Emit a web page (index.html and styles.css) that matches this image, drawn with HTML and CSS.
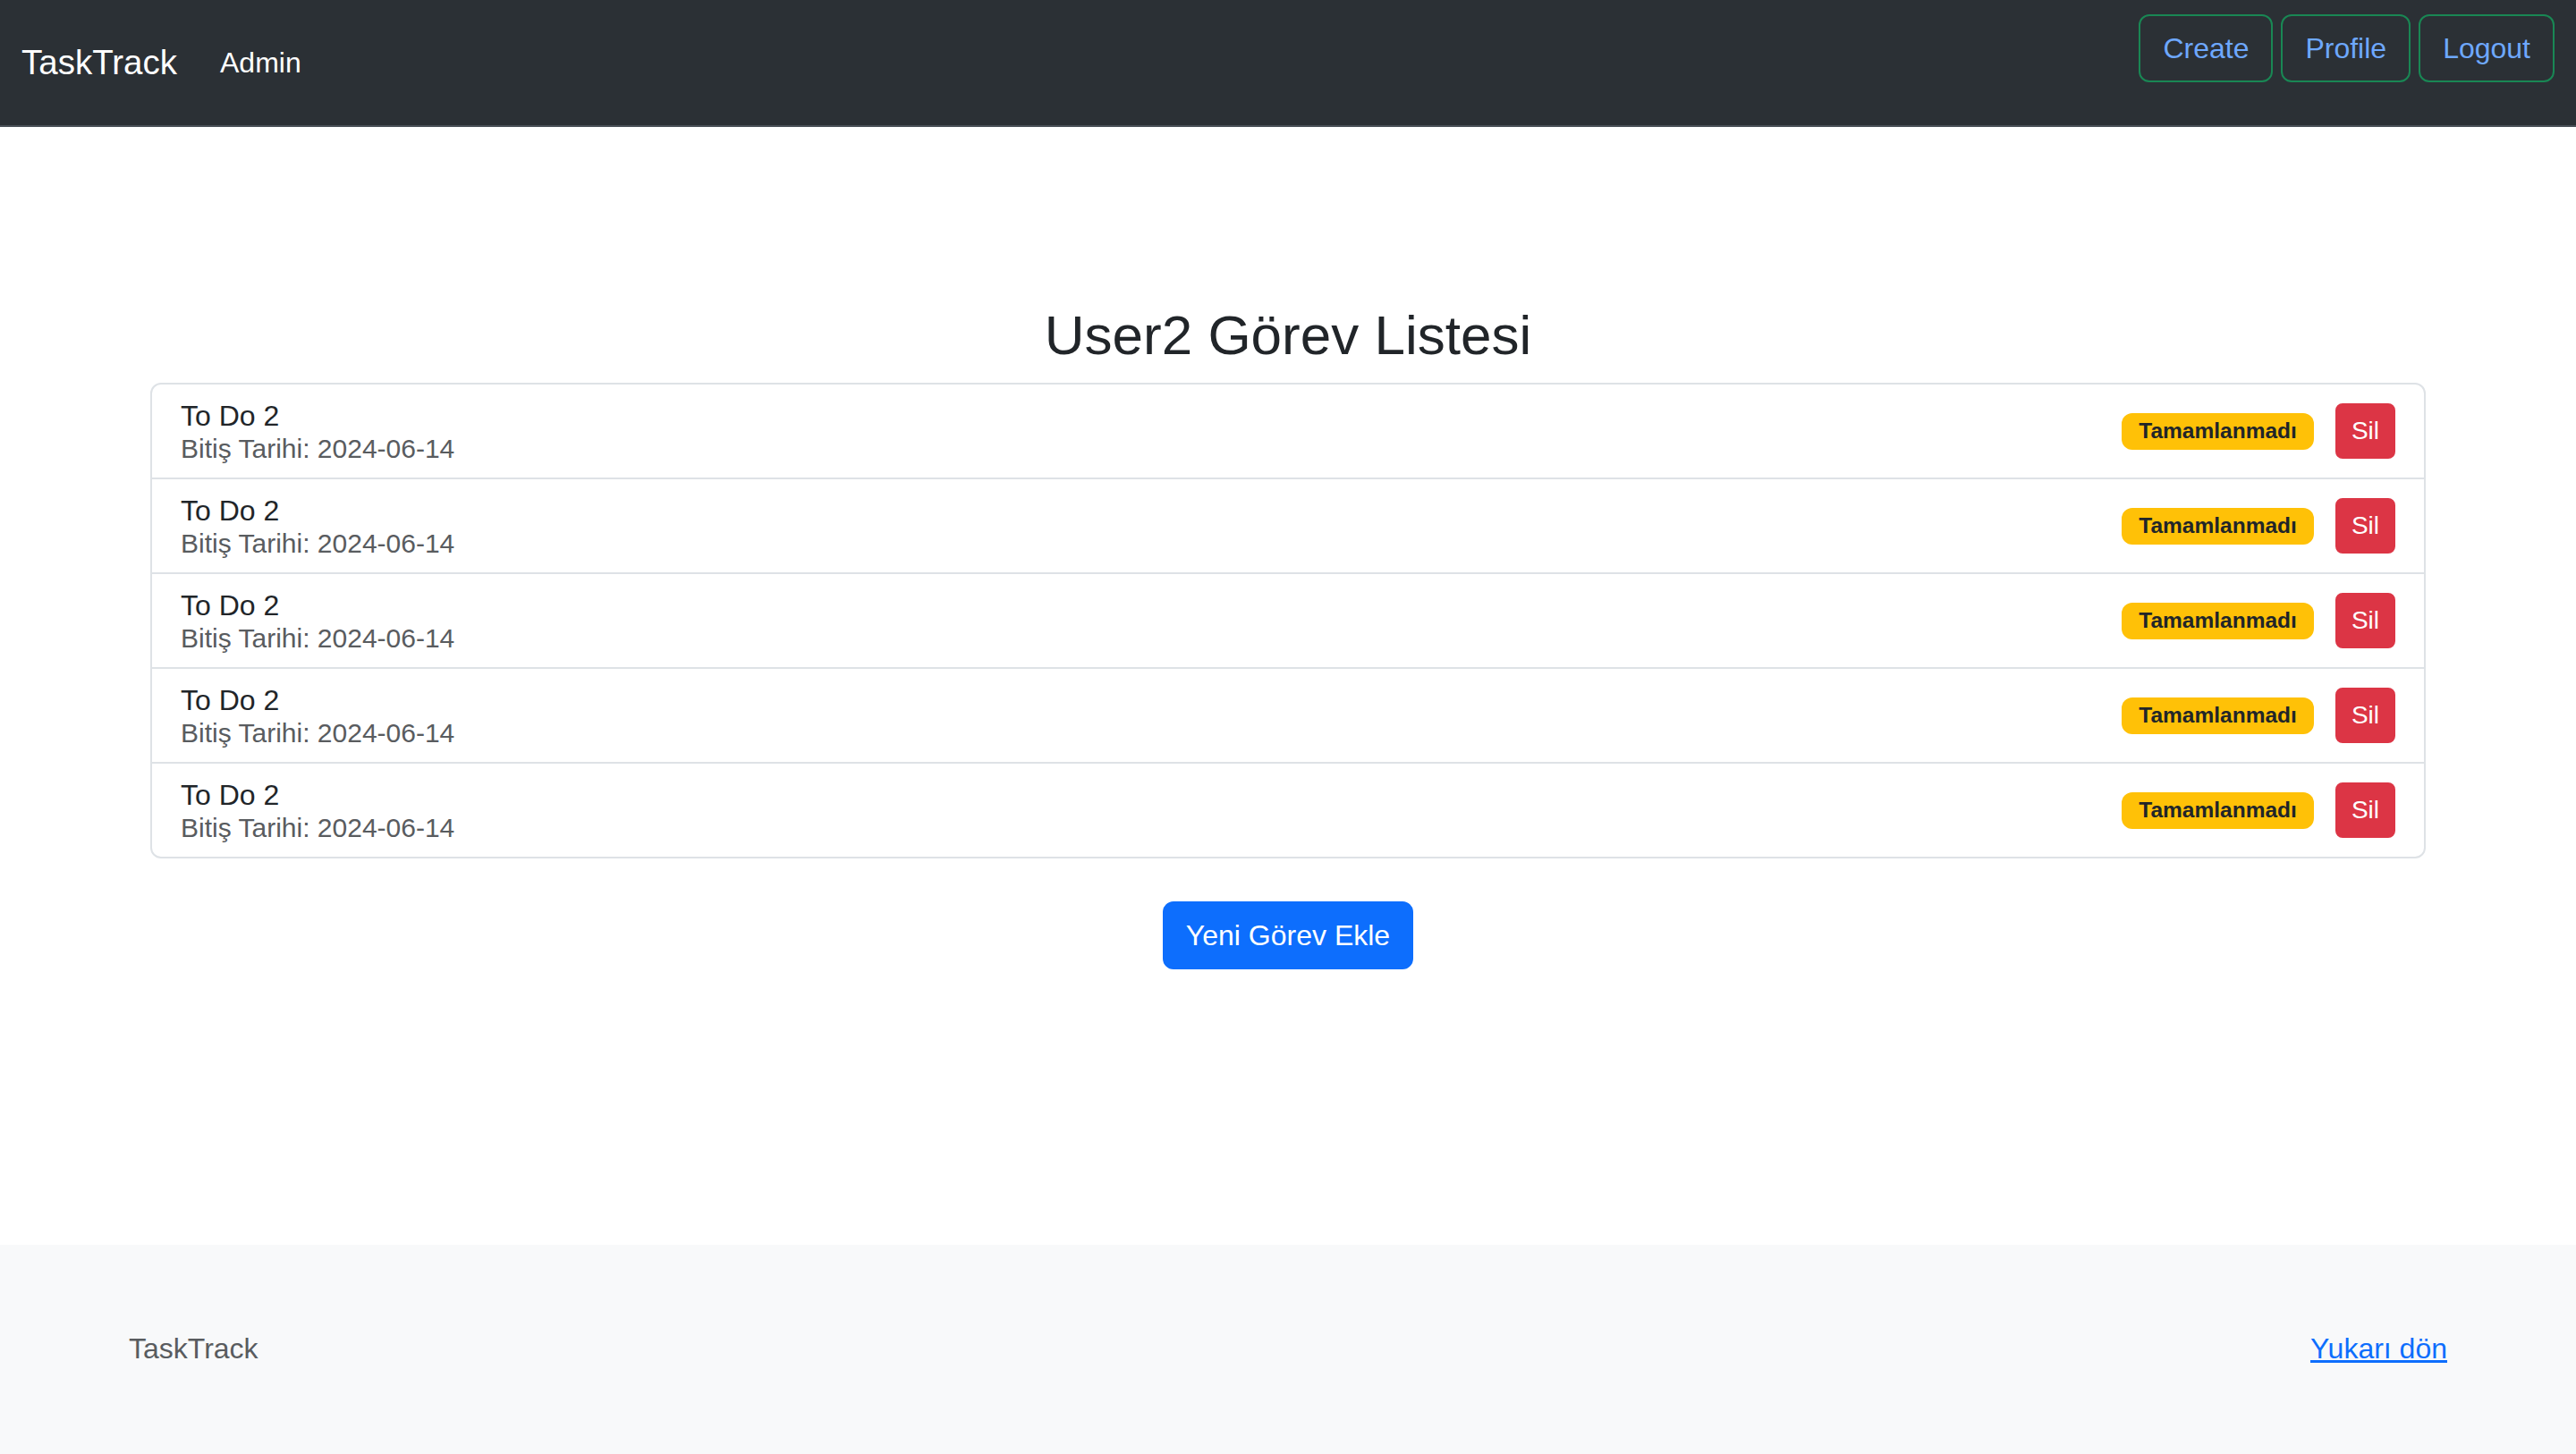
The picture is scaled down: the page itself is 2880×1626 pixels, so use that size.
FILE: index.html
```html
<!DOCTYPE html>
<html lang="tr">
<head>
<meta charset="utf-8">
<title>TaskTrack</title>
<link rel="stylesheet" href="styles.css">
</head>
<body>
<nav class="navbar">
  <div class="nav-left">
    <a class="brand" href="#">TaskTrack</a>
    <a class="nav-link" href="#">Admin</a>
  </div>
  <div class="nav-right">
    <a class="btn-outline" href="#">Create</a>
    <a class="btn-outline" href="#">Profile</a>
    <a class="btn-outline" href="#">Logout</a>
  </div>
</nav>
<main class="main">
  <h2 class="title">User2 Görev Listesi</h2>
  <ul class="list">
    <li class="item">
      <div class="item-text"><div class="item-title">To Do 2</div><div class="item-date">Bitiş Tarihi: 2024-06-14</div></div>
      <div class="item-actions"><span class="badge">Tamamlanmadı</span><button class="btn-danger">Sil</button></div>
    </li>
    <li class="item">
      <div class="item-text"><div class="item-title">To Do 2</div><div class="item-date">Bitiş Tarihi: 2024-06-14</div></div>
      <div class="item-actions"><span class="badge">Tamamlanmadı</span><button class="btn-danger">Sil</button></div>
    </li>
    <li class="item">
      <div class="item-text"><div class="item-title">To Do 2</div><div class="item-date">Bitiş Tarihi: 2024-06-14</div></div>
      <div class="item-actions"><span class="badge">Tamamlanmadı</span><button class="btn-danger">Sil</button></div>
    </li>
    <li class="item">
      <div class="item-text"><div class="item-title">To Do 2</div><div class="item-date">Bitiş Tarihi: 2024-06-14</div></div>
      <div class="item-actions"><span class="badge">Tamamlanmadı</span><button class="btn-danger">Sil</button></div>
    </li>
    <li class="item">
      <div class="item-text"><div class="item-title">To Do 2</div><div class="item-date">Bitiş Tarihi: 2024-06-14</div></div>
      <div class="item-actions"><span class="badge">Tamamlanmadı</span><button class="btn-danger">Sil</button></div>
    </li>
  </ul>
  <div class="add-wrap"><a class="btn-primary" href="#">Yeni Görev Ekle</a></div>
</main>
<footer class="footer">
  <div class="footer-inner">
    <span class="footer-brand">TaskTrack</span>
    <a class="footer-link" href="#">Yukarı dön</a>
  </div>
</footer>
</body>
</html>
```
FILE: styles.css
```css
* { box-sizing: border-box; }
html, body { margin: 0; padding: 0; }
body {
  font-family: "Liberation Sans", Arial, sans-serif;
  font-size: 32px;
  line-height: 1.5;
  color: #212529;
  background: #fff;
}
a { text-decoration: none; }

.navbar {
  height: 142px;
  background: #2b3035;
  border-bottom: 2px solid #495057;
  display: flex;
  justify-content: space-between;
  align-items: center;
  padding: 0 24px;
}
.nav-left { display: flex; align-items: center; }
.brand {
  color: #fff;
  font-size: 38.5px;
  line-height: 60px;
  margin-right: 32px;
}
.nav-link {
  color: #fff;
  font-size: 32px;
  line-height: 48px;
  padding: 0 16px;
}
.nav-right {
  align-self: flex-start;
  margin-top: 16px;
  display: flex;
  gap: 9px;
}
.btn-outline {
  display: inline-block;
  color: #6ea8fe;
  border: 2px solid #198754;
  border-radius: 12px;
  padding: 12px 25px;
  font-size: 32px;
  line-height: 48px;
}

.main {
  min-height: 1250px;
  padding: 196px 168px 0;
}
.title {
  margin: 0 0 16px;
  text-align: center;
  font-size: 62px;
  line-height: 1.2;
  font-weight: 400;
}
.list {
  list-style: none;
  margin: 0;
  padding: 0;
  border: 2px solid #dee2e6;
  border-radius: 12px;
}
.item {
  display: flex;
  justify-content: space-between;
  align-items: center;
  padding: 18px 32px 14px;
  border-top: 2px solid #dee2e6;
}
.item:first-child { border-top: none; }
.item-title { font-size: 32px; line-height: 35px; }
.item-date { font-size: 30px; line-height: 37px; color: #595c5f; }
.item-actions { display: flex; align-items: center; gap: 24px; margin-top: -4px; }
.badge {
  display: inline-block;
  background: #ffc107;
  color: #212529;
  font-size: 24.5px;
  font-weight: 700;
  line-height: 1;
  padding: 8.25px 19px;
  border-radius: 12px;
}
.btn-danger {
  font-family: inherit;
  background: #dc3545;
  color: #fff;
  border: 2px solid #dc3545;
  border-radius: 8px;
  font-size: 28px;
  line-height: 42px;
  padding: 8px 16px;
  cursor: pointer;
}
.add-wrap {
  display: flex;
  justify-content: center;
  margin-top: 48px;
}
.btn-primary {
  display: inline-block;
  background: #0d6efd;
  color: #fff;
  border: 2px solid #0d6efd;
  border-radius: 12px;
  padding: 12px 24px;
  font-size: 32px;
  line-height: 48px;
}

.footer {
  background: #f8f9fa;
  padding: 92px 0 96px;
}
.footer-inner {
  width: 2640px;
  margin: 0 auto;
  padding: 0 24px;
  display: flex;
  justify-content: space-between;
  align-items: center;
}
.footer-brand { color: #595c5f; font-size: 32px; line-height: 48px; }
.footer-link { color: #0d6efd; text-decoration: underline; font-size: 32px; line-height: 48px; }
```
